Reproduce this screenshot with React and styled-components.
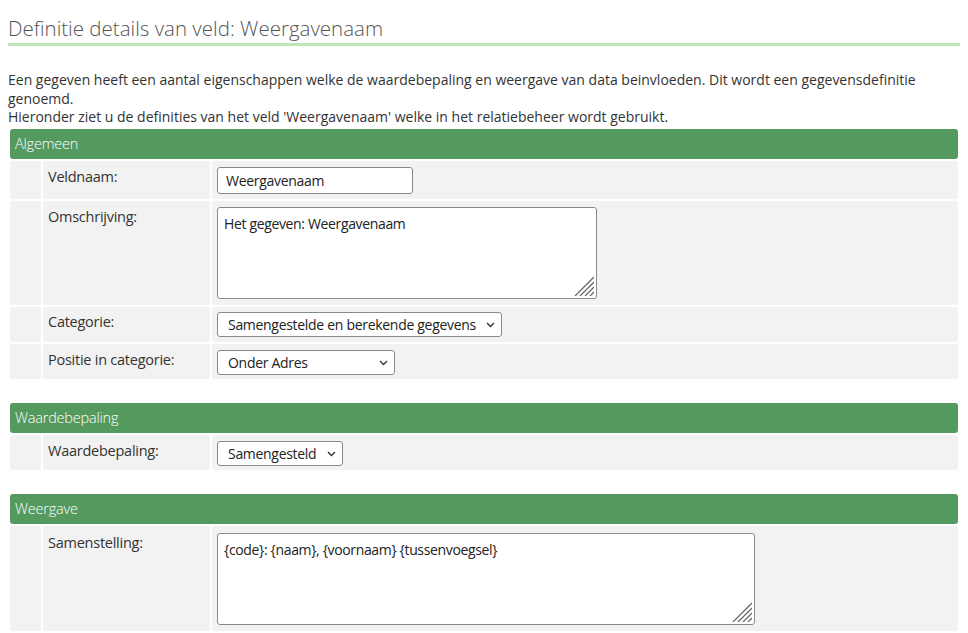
import styled, { createGlobalStyle } from 'styled-components'

const GlobalStyle = createGlobalStyle`
  body {
    margin: 8px;
    font-family: "Open Sans", "Noto Sans", sans-serif;
    font-size: 14px;
    color: #333;
    background: #fff;
  }
`

const Title = styled.h1`
  margin: 0;
  padding: 8px 0 3px;
  font-size: 20.5px;
  line-height: 24px;
  font-weight: 300;
  color: #555;
  border-bottom: 3px solid #bde5b6;
`

const Intro = styled.p`
  margin: 25px 0 0;
  line-height: 18.7px;
`

const Section = styled.div`
  display: grid;
  grid-template-columns: 31px 167px 1fr;
  gap: 2px;
  padding: 2px;
  margin-bottom: 20px;
`

const Header = styled.div`
  grid-column: 1 / -1;
  height: 30px;
  line-height: 30px;
  padding-left: 5px;
  background: #549a5f;
  color: #fff;
  font-size: 14.5px;
  font-weight: 300;
  letter-spacing: -0.2px;
  border-radius: 3px;
`

const Cell = styled.div`
  background: #f2f2f2;
  border-radius: 2px;
  padding: ${(p) => p.$pad || '6px 5px 5px'};
`

const Label = styled(Cell)`
  font-size: 14.5px;
  line-height: 20px;
  letter-spacing: -0.25px;
`

const TextInput = styled.input`
  display: block;
  box-sizing: border-box;
  width: ${(p) => p.$w}px;
  height: 27px;
  margin: 0;
  padding: 0 8px;
  border: 1px solid #8a8a8a;
  border-radius: 3px;
  font: inherit;
  font-size: 14px;
  letter-spacing: -0.3px;
  color: #222;
  background: #fff;
`

const AreaWrap = styled.div`
  position: relative;
  width: ${(p) => p.$w}px;
  height: 92px;
`

const TextArea = styled.textarea`
  display: block;
  box-sizing: border-box;
  width: 100%;
  height: 100%;
  margin: 0;
  padding: 6px 6px;
  border: 1px solid #8a8a8a;
  border-radius: 3px;
  font: inherit;
  font-size: 14px;
  letter-spacing: -0.35px;
  color: #222;
  background: #fff;
  resize: none;
`

const Grip = styled.svg`
  position: absolute;
  right: 3px;
  bottom: 3px;
  pointer-events: none;
`

const SelectWrap = styled.div`
  position: relative;
  width: ${(p) => p.$w}px;
  height: 25px;
`

const Select = styled.select`
  appearance: none;
  display: block;
  box-sizing: border-box;
  width: 100%;
  height: 100%;
  margin: 0;
  padding: 0 20px 0 10px;
  border: 1px solid #8a8a8a;
  border-radius: 3px;
  font: inherit;
  font-size: 14px;
  letter-spacing: -0.3px;
  color: #222;
  background: #fff;
`

const Chevron = styled.svg`
  position: absolute;
  right: 7px;
  top: 10px;
  pointer-events: none;
`

const Dropdown = ({ w, value }) => (
  <SelectWrap $w={w}>
    <Select defaultValue={value}>
      <option>{value}</option>
    </Select>
    <Chevron width="9" height="6" viewBox="0 0 9 6">
      <polyline points="1,1 4.5,4.5 8,1" fill="none" stroke="#333" strokeWidth="1.4" />
    </Chevron>
  </SelectWrap>
)

const Area = ({ w, value }) => (
  <AreaWrap $w={w}>
    <TextArea defaultValue={value} />
    <Grip width="20" height="20" viewBox="0 0 20 20">
      {[1, 6, 11, 16].map((o) => (
        <line key={o} x1={o} y1="20" x2="20" y2={o} stroke="#6a6a6a" strokeWidth="1.3" />
      ))}
    </Grip>
  </AreaWrap>
)

const Row = ({ label, children, pad }) => (
  <>
    <Cell />
    <Label $pad={pad}>{label}</Label>
    <Cell $pad={pad}>{children}</Cell>
  </>
)

export default function App() {
  return (
    <>
      <GlobalStyle />
      <Title>Definitie details van veld: Weergavenaam</Title>
      <Intro>
        Een gegeven heeft een aantal eigenschappen welke de waardebepaling en weergave van data beinvloeden. Dit wordt een gegevensdefinitie genoemd.
        <br />
        Hieronder ziet u de definities van het veld 'Weergavenaam' welke in het relatiebeheer wordt gebruikt.
      </Intro>

      <Section>
        <Header>Algemeen</Header>
        <Row label="Veldnaam:">
          <TextInput $w={196} defaultValue="Weergavenaam" />
        </Row>
        <Row label="Omschrijving:" pad="6px 5px 6px">
          <Area w={380} value="Het gegeven: Weergavenaam" />
        </Row>
        <Row label="Categorie:" pad="5px 5px 5px">
          <Dropdown w={285} value="Samengestelde en berekende gegevens" />
        </Row>
        <Row label="Positie in categorie:" pad="6px 5px 4px">
          <Dropdown w={178} value="Onder Adres" />
        </Row>
      </Section>

      <Section>
        <Header>Waardebepaling</Header>
        <Row label="Waardebepaling:" pad="6px 5px 4px">
          <Dropdown w={126} value="Samengesteld" />
        </Row>
      </Section>

      <Section>
        <Header>Weergave</Header>
        <Row label="Samenstelling:" pad="7px 5px 6px">
          <Area w={538} value="{code}: {naam}, {voornaam} {tussenvoegsel}" />
        </Row>
      </Section>
    </>
  )
}
